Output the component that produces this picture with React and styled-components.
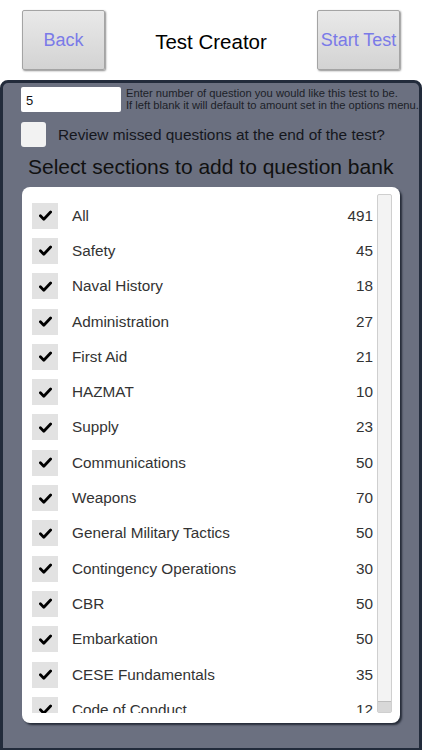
import React from "react";
import styled, { createGlobalStyle } from "styled-components";

const Global = createGlobalStyle`
  html, body { margin: 0; padding: 0; background: #ffffff; }
  body { font-family: "Liberation Sans", Arial, sans-serif; }
  * { box-sizing: border-box; }
`;

const Page = styled.div`
  width: 422px;
  height: 750px;
  display: flex;
  flex-direction: column;
  overflow: hidden;
`;

const Header = styled.div`
  height: 80px;
  flex: none;
  display: flex;
  align-items: center;
  justify-content: space-between;
  padding: 0 22px 0 22px;
`;

const NavButton = styled.button`
  width: 83px;
  height: 60px;
  border: 1px solid #a4a4a4;
  border-radius: 2px;
  background: linear-gradient(#e9e9e9, #d3d3d3);
  box-shadow: 1px 1px 2px rgba(0, 0, 0, 0.45);
  color: #7a7ae8;
  font-family: "Liberation Sans", Arial, sans-serif;
  font-size: 18px;
  padding: 0;
  white-space: nowrap;
`;

const Title = styled.div`
  font-size: 20.5px;
  color: #000;
  padding-top: 4px;
`;

const Panel = styled.div`
  flex: 1;
  background: #6b7080;
  border: 3px solid #222b3b;
  border-bottom-width: 2px;
  border-radius: 8px 8px 0 0;
  padding: 4px 0 0 18px;
  display: flex;
  flex-direction: column;
`;

const InputRow = styled.div`
  display: flex;
  align-items: flex-start;
  gap: 5px;
`;

const CountInput = styled.div`
  width: 100px;
  height: 25px;
  background: #fff;
  border-radius: 2px;
  font-size: 13px;
  color: #111;
  padding: 6px 0 0 5px;
`;

const Hint = styled.div`
  font-size: 11.2px;
  line-height: 11.5px;
  color: #1c1f28;
  padding-top: 1px;
  white-space: nowrap;
`;

const ReviewRow = styled.div`
  display: flex;
  align-items: center;
  gap: 12px;
  margin-top: 10px;
`;

const ReviewBox = styled.div`
  width: 25px;
  height: 25px;
  border-radius: 3px;
  background: #f2f2f2;
`;

const ReviewText = styled.div`
  font-size: 15.4px;
  color: #15171d;
`;

const Heading = styled.div`
  font-size: 21px;
  line-height: 24px;
  color: #111;
  margin: 8px 0 0 7px;
  white-space: nowrap;
`;

const Card = styled.div`
  margin-top: 8px;
  margin-left: 1px;
  width: 378px;
  height: 536px;
  background: #fff;
  border-radius: 8px;
  box-shadow: 2px 2px 2px #262c38;
  display: flex;
  padding: 7px 8px 10px 10px;
`;

const List = styled.div`
  flex: 1;
  overflow: hidden;
  padding-top: 4px;
`;

const Row = styled.div`
  height: 35.3px;
  display: flex;
  align-items: center;
`;

const CheckBox = styled.div`
  width: 26px;
  height: 26px;
  background: #e2e2e2;
  display: flex;
  align-items: center;
  justify-content: center;
  flex: none;
`;

const Label = styled.div`
  flex: 1;
  margin-left: 14px;
  font-size: 15.3px;
  color: #333;
  white-space: nowrap;
`;

const Count = styled.div`
  font-size: 15.3px;
  color: #333;
  padding-right: 4px;
`;

const Scrollbar = styled.div`
  width: 15px;
  flex: none;
  background: #f3f3f3;
  border: 1px solid #cfcfcf;
  border-radius: 2px;
  display: flex;
  flex-direction: column;
  justify-content: flex-end;
`;

const Thumb = styled.div`
  height: 11px;
  background: #d8d8d8;
  border-top: 1px solid #bdbdbd;
`;

const Check = () => (
  <svg width="13" height="11" viewBox="0 0 13 11">
    <path d="M1.4 5.8 L4.8 9.2 L11.6 2" fill="none" stroke="#000" strokeWidth="2.8" strokeLinecap="round" strokeLinejoin="round" />
  </svg>
);

const sections = [
  ["All", 491],
  ["Safety", 45],
  ["Naval History", 18],
  ["Administration", 27],
  ["First Aid", 21],
  ["HAZMAT", 10],
  ["Supply", 23],
  ["Communications", 50],
  ["Weapons", 70],
  ["General Military Tactics", 50],
  ["Contingency Operations", 30],
  ["CBR", 50],
  ["Embarkation", 50],
  ["CESE Fundamentals", 35],
  ["Code of Conduct", 12],
];

export default function App() {
  return (
    <Page>
      <Global />
      <Header>
        <NavButton>Back</NavButton>
        <Title>Test Creator</Title>
        <NavButton>Start Test</NavButton>
      </Header>
      <Panel>
        <InputRow>
          <CountInput>5</CountInput>
          <Hint>
            Enter number of question you would like this test to be.
            <br />
            If left blank it will default to amount set in the options menu.
          </Hint>
        </InputRow>
        <ReviewRow>
          <ReviewBox />
          <ReviewText>Review missed questions at the end of the test?</ReviewText>
        </ReviewRow>
        <Heading>Select sections to add to question bank</Heading>
        <Card>
          <List>
            {sections.map(([name, n]) => (
              <Row key={name}>
                <CheckBox>
                  <Check />
                </CheckBox>
                <Label>{name}</Label>
                <Count>{n}</Count>
              </Row>
            ))}
          </List>
          <Scrollbar>
            <Thumb />
          </Scrollbar>
        </Card>
      </Panel>
    </Page>
  );
}
